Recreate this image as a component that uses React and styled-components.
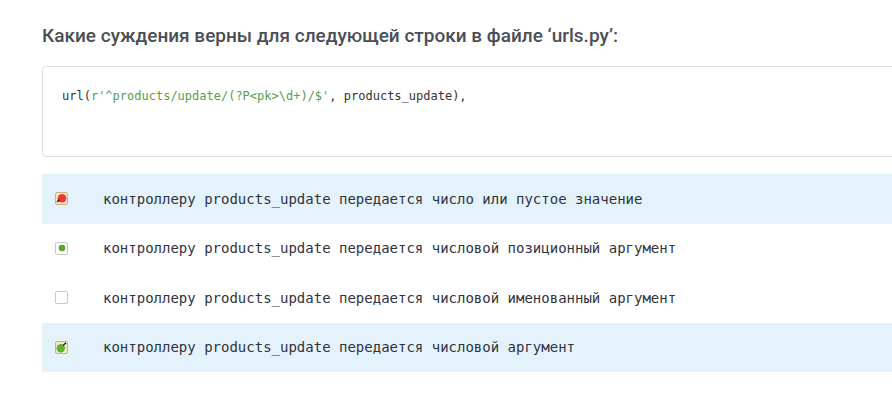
import React from "react";
import styled, { createGlobalStyle } from "styled-components";

const GlobalStyle = createGlobalStyle`
  body {
    margin: 0;
    background: #ffffff;
    overflow: hidden;
  }
`;

const Page = styled.div`
  padding: 22px 0 0 42px;
  width: 880px;
`;

const Title = styled.h2`
  margin: 0 0 16px 0;
  font-family: Roboto, "Liberation Sans", sans-serif;
  font-weight: 500;
  font-size: 19px;
  line-height: 28px;
  color: #4a4f56;
`;

const CodeBox = styled.pre`
  margin: 0;
  height: 89px;
  box-sizing: content-box;
  padding: 0 19px;
  border: 1px solid #dedede;
  border-radius: 4px;
  font-family: "DejaVu Sans Mono", "Liberation Mono", monospace;
  font-size: 12px;
  line-height: 20px;
  color: #333;
  display: flex;
  align-items: flex-start;
`;

const CodeLine = styled.div`
  margin-top: 19px;
`;

const Str = styled.span`
  color: #56a049;
`;

const Answers = styled.div`
  margin-top: 17px;
  display: flex;
  flex-direction: column;
`;

const Row = styled.div`
  height: 49.5px;
  display: flex;
  align-items: center;
  padding-left: 13px;
  background: ${(p) => (p.$active ? "#e4f2fb" : "transparent")};
`;

const Box = styled.div`
  width: 11px;
  height: 11px;
  border: 1px solid ${(p) => (p.$marked ? "#d2b07a" : "#c9c9c9")};
  background: ${(p) => (p.$marked ? "#f8e6c7" : "#ffffff")};
  border-radius: 2px;
  display: flex;
  align-items: center;
  justify-content: center;
  flex-shrink: 0;
`;

const Label = styled.span`
  margin-left: 35px;
  font-family: "DejaVu Sans Mono", "Liberation Mono", monospace;
  font-size: 14px;
  color: #2f3340;
`;

function Tomato() {
  return (
    <svg width="11" height="11" viewBox="0 0 11 11">
      <circle cx="6" cy="5.2" r="4.3" fill="#e8383a" />
      <path d="M1 9 L3.2 7" stroke="#3a2a20" strokeWidth="1.4" />
      <circle cx="2.6" cy="7.6" r="1" fill="#3a2a20" />
    </svg>
  );
}

function Apple() {
  return (
    <svg width="11" height="11" viewBox="0 0 11 11">
      <circle cx="4.8" cy="6.3" r="4.2" fill="#62b032" />
      <path d="M7 3.6 L10 0.8" stroke="#222" strokeWidth="1.4" />
    </svg>
  );
}

function Dot() {
  return (
    <svg width="8" height="8" viewBox="0 0 8 8">
      <circle cx="4" cy="4" r="3.3" fill="#5aa32a" />
    </svg>
  );
}

const answers = [
  { text: "контроллеру products_update передается число или пустое значение", active: true, mark: "tomato" },
  { text: "контроллеру products_update передается числовой позиционный аргумент", active: false, mark: "dot" },
  { text: "контроллеру products_update передается числовой именованный аргумент", active: false, mark: null },
  { text: "контроллеру products_update передается числовой аргумент", active: true, mark: "apple" },
];

export default function App() {
  return (
    <>
      <GlobalStyle />
      <Page>
        <Title>Какие суждения верны для следующей строки в файле ‘urls.py’:</Title>
        <CodeBox>
          <CodeLine>
            url(<Str>r'^products/update/(?P&lt;pk&gt;\d+)/$'</Str>, products_update),
          </CodeLine>
        </CodeBox>
        <Answers>
          {answers.map((a, i) => (
            <Row key={i} $active={a.active}>
              <Box $marked={a.mark === "tomato" || a.mark === "apple"}>
                {a.mark === "tomato" && <Tomato />}
                {a.mark === "apple" && <Apple />}
                {a.mark === "dot" && <Dot />}
              </Box>
              <Label>{a.text}</Label>
            </Row>
          ))}
        </Answers>
      </Page>
    </>
  );
}
